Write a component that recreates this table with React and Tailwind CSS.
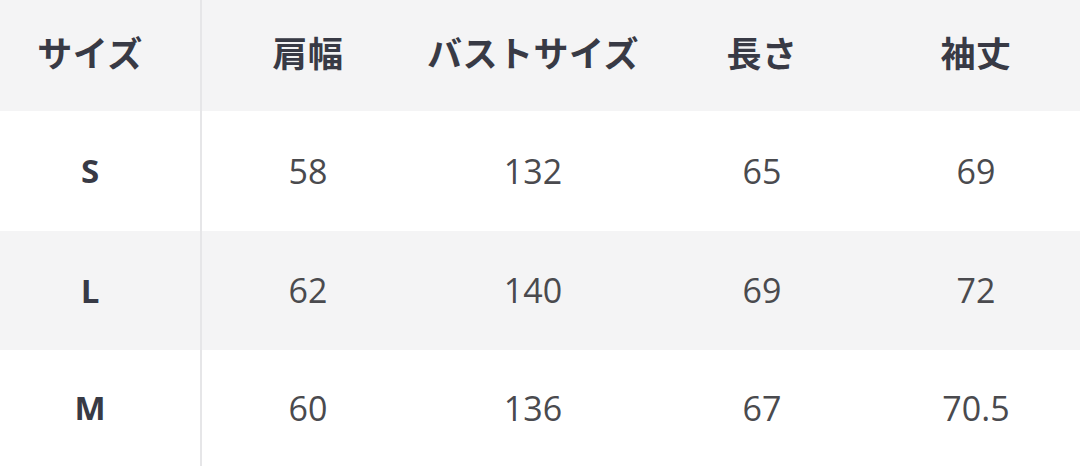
export default function App() {
  const header = ["サイズ", "肩幅", "バストサイズ", "長さ", "袖丈"];
  const rows = [
    { size: "S", vals: ["58", "132", "65", "69"], h: "h-[120px]", bg: "bg-white" },
    { size: "L", vals: ["62", "140", "69", "72"], h: "h-[119px]", bg: "bg-[#f4f4f5]" },
    { size: "M", vals: ["60", "136", "67", "70.5"], h: "h-[116px]", bg: "bg-white" },
  ];
  const cols = "grid grid-cols-[202px_212px_238px_220px_208px]";
  return (
    <div className="w-[1080px] h-[466px] overflow-hidden bg-white" style={{ fontFamily: '"Open Sans", "Noto Sans CJK JP", sans-serif' }}>
      <div className={`${cols} h-[111px] bg-[#f4f4f5] items-stretch`}>
        {header.map((t, i) => (
          <div
            key={t}
            className={`flex items-center justify-center pb-[6px] text-[35px] font-bold text-[#383a45] tracking-[0.5px] ${i === 0 ? "border-r-2 border-[#e6e6e8] pr-[20px]" : ""}`}
            style={{ fontFamily: '"Noto Sans CJK JP", sans-serif' }}
          >
            {t}
          </div>
        ))}
      </div>
      {rows.map((r) => (
        <div key={r.size} className={`${cols} ${r.h} ${r.bg}`}>
          <div className="flex items-center justify-center border-r-2 border-[#e6e6e8] pr-[20px] text-[33px] font-bold text-[#383a45]">
            {r.size}
          </div>
          {r.vals.map((v, j) => (
            <div key={j} className="flex items-center justify-center text-[34px] font-normal text-[#4a4a4e]">
              {v}
            </div>
          ))}
        </div>
      ))}
    </div>
  );
}
